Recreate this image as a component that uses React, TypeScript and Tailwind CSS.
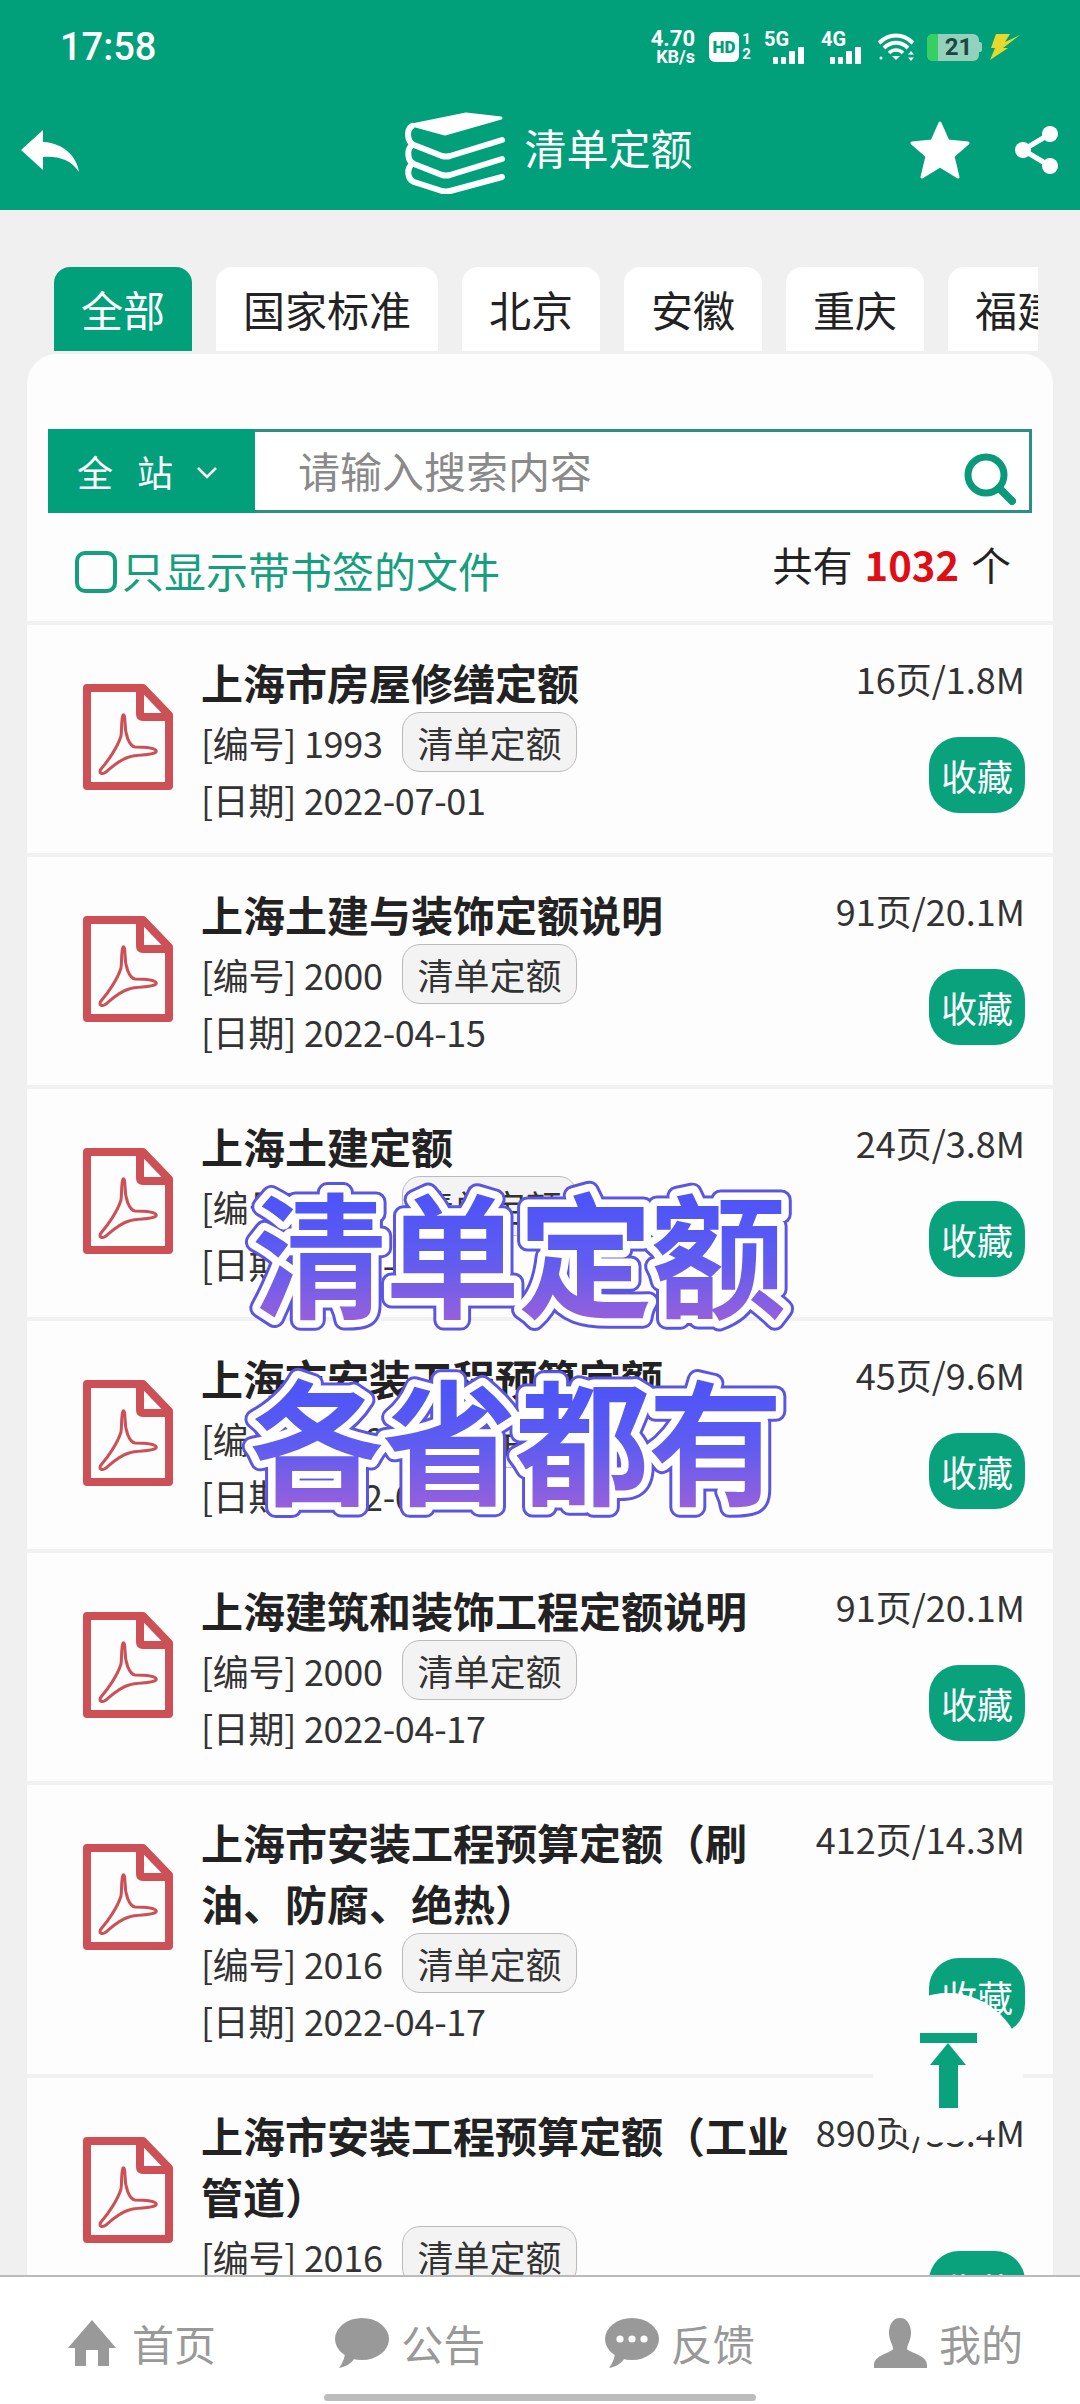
import React from "react";

const items = [
  { t: "上海市房屋修缮定额", n: "1993", d: "2022-07-01", s: "16页/1.8M" },
  { t: "上海土建与装饰定额说明", n: "2000", d: "2022-04-15", s: "91页/20.1M" },
  { t: "上海土建定额", n: "2000", d: "2022-04-15", s: "24页/3.8M" },
  { t: "上海市安装工程预算定额", n: "2016", d: "2022-04-17", s: "45页/9.6M" },
  { t: "上海建筑和装饰工程定额说明", n: "2000", d: "2022-04-17", s: "91页/20.1M" },
  { t: "上海市安装工程预算定额（刷油、防腐、绝热）", n: "2016", d: "2022-04-17", s: "412页/14.3M" },
  { t: "上海市安装工程预算定额（工业管道）", n: "2016", d: "2022-04-17", s: "890页/33.4M" },
];

function PdfIcon() {
  return (
    <svg width="90" height="106" viewBox="0 0 90 106" fill="none" stroke="#cd5056" strokeLinejoin="round">
      <path d="M4 4H60L86 31V102H4Z" strokeWidth="8" />
      <path d="M57 4V30Q57 33 60 33H86" strokeWidth="8" />
      <path d="M40 31C38 37 39 45 38 52C35 62 26 76 18 85C15 89 19 91 23 88C30 82 36 76 46 73C55 70 68 72 73 68C75 64 62 63 52 63C46 62 42 50 42 38C42 33 41 30 40 31Z" strokeWidth="3" />
    </svg>
  );
}

function Bars() {
  return (
    <div className="flex items-end gap-[3px] h-[17px] ml-[9px]">
      <div className="w-[5px] h-[7px] bg-white rounded-[1px]" />
      <div className="w-[5px] h-[7px] bg-white rounded-[1px]" />
      <div className="w-[6px] h-[13px] bg-white rounded-[1px]" />
      <div className="w-[6px] h-[17px] bg-white rounded-[1px]" />
    </div>
  );
}

function Signal({ label }: { label: string }) {
  return (
    <div className="flex flex-col w-[45px] h-[30px]">
      <span className="text-[20px] leading-[15px] font-bold text-white">{label}</span>
      <Bars />
    </div>
  );
}

function StatusBar() {
  return (
    <div className="h-[94px] flex items-center pl-[60px] pr-[60px] justify-between font-['Roboto',sans-serif] text-white">
      <span className="text-[38px] font-medium leading-none">17:58</span>
      <div className="flex items-center">
        <div className="flex flex-col items-end w-[46px] font-bold">
          <span className="text-[22px] leading-[19px]">4.70</span>
          <span className="text-[18px] leading-[17px]">KB/s</span>
        </div>
        <div className="ml-[14px] w-[30px] h-[30px] rounded-[6px] bg-white flex items-center justify-center">
          <span className="text-[#02a07a] text-[17px] font-black leading-none">HD</span>
        </div>
        <div className="ml-[2px] w-[11px] flex flex-col items-center text-[15px] font-bold leading-[15px]">
          <span>1</span>
          <span>2</span>
        </div>
        <div className="ml-[12px]"><Signal label="5G" /></div>
        <div className="ml-[12px]"><Signal label="4G" /></div>
        <svg className="ml-[10px]" width="40" height="30" viewBox="0 0 40 30" fill="none" stroke="#fff">
          <path d="M3 11C13 1 27 1 37 11" strokeWidth="4" />
          <path d="M8 16C15 9 25 9 32 16" strokeWidth="4" />
          <path d="M13 21C17 17 23 17 27 21" strokeWidth="3.5" />
          <path d="M16 24H24L20 28Z" fill="#fff" strokeWidth="0" />
          <circle cx="5" cy="26" r="1.5" fill="#fff" strokeWidth="0" />
          <path d="M35 19L38 22.5H32ZM35 29L38 25.5H32Z" fill="#fff" strokeWidth="0" />
        </svg>
        <div className="ml-[11px] w-[52px] h-[27px] rounded-[6px] bg-[#93d1bd] flex overflow-hidden">
          <div className="w-[11px] h-full bg-[#35cf62]" />
          <span className="flex-1 text-center text-[24px] font-bold leading-[27px] text-[#17493f]">21</span>
        </div>
        <div className="w-[3px] h-[10px] bg-[#93d1bd] rounded-r-[2px]" />
        <svg className="ml-[8px]" width="30" height="26" viewBox="0 0 30 26">
          <path d="M6 0H20L15 8L30 1L13 14H18L0 26L5 14H1Z" fill="#e4d92c" />
        </svg>
      </div>
    </div>
  );
}

function NavBar() {
  return (
    <div className="h-[116px] flex items-start justify-between pl-[21px] pr-[20px] pt-[20px] text-white">
      <svg className="mt-[16px]" width="58" height="42" viewBox="0 0 58 42" fill="#fff">
        <path d="M0 20L22 0V12C44 13 56 28 58 42C50 30 38 26 22 27V40Z" />
      </svg>
      <div className="flex items-center mt-[-2px] ml-[109px]">
        <svg width="102" height="82" viewBox="0 0 102 82" fill="none" stroke="#fff" strokeWidth="6" strokeLinecap="round" strokeLinejoin="round">
          <path d="M8 13L62 2L97 6L41 22Z" fill="#fff" strokeWidth="3" />
          <path d="M98 28L46 44Q42 45 38 44L10 33C3 30 2 18 8 14" />
          <path d="M98 47L46 63Q42 64 38 63L10 52C3 49 3 38 7 34" />
          <path d="M98 65L46 79Q42 80 38 79L10 70C3 67 3 57 7 53" />
        </svg>
        <span className="ml-[18px] text-[42px] leading-none -mt-[12px]">清单定额</span>
      </div>
      <div className="flex items-center">
        <svg className="mt-[6px]" width="62" height="60" viewBox="0 0 62 60" fill="#fff" stroke="#fff" strokeWidth="3" strokeLinejoin="round">
          <path d="M31 3L39 21L59 23L44 36L49 57L31 46L13 57L18 36L3 23L23 21Z" />
        </svg>
        <svg className="ml-[43px] mt-[6px]" width="46" height="50" viewBox="0 0 46 50" fill="#fff" stroke="#fff">
          <circle cx="36" cy="9" r="8" strokeWidth="0" />
          <circle cx="9" cy="25" r="8" strokeWidth="0" />
          <circle cx="36" cy="41" r="8" strokeWidth="0" />
          <path d="M36 9L9 25L36 41" fill="none" strokeWidth="5" />
        </svg>
      </div>
    </div>
  );
}

function Tabs() {
  const tabs = ["国家标准", "北京", "安徽", "重庆", "福建"];
  return (
    <div className="ml-[54px] w-[984px] h-[84px] mt-[57px] flex gap-[24px] overflow-hidden">
      <div className="shrink-0 h-full px-[27px] rounded-t-[16px] bg-[#02a07a] text-white text-[42px] leading-[84px]">全部</div>
      {tabs.map((t) => (
        <div key={t} className="shrink-0 h-full px-[27px] rounded-t-[16px] bg-white text-[#222] text-[42px] leading-[84px]">{t}</div>
      ))}
    </div>
  );
}

function Search() {
  return (
    <div className="mx-[21px] h-[84px] flex border-[3px] border-[#2c9080] bg-white">
      <div className="w-[207px] -ml-[3px] -my-[3px] bg-[#02a07a] flex items-center pl-[29px] text-white text-[36px]">
        <span>全</span>
        <span className="ml-[24px]">站</span>
        <svg className="ml-[24px] mt-[4px]" width="20" height="12" viewBox="0 0 20 12" fill="none" stroke="#fff" strokeWidth="2.5">
          <path d="M1 1L10 10L19 1" />
        </svg>
      </div>
      <div className="flex-1 flex items-center pl-[43px] pb-[2px] text-[42px] text-[#8a8a8a] leading-none">请输入搜索内容</div>
      <svg className="mr-[13px] mt-[21px]" width="52" height="52" viewBox="0 0 52 52" fill="none" stroke="#0a9a7a" strokeWidth="7">
        <circle cx="22" cy="22" r="18" />
        <path d="M35 35L48 48" strokeLinecap="round" strokeWidth="8" />
      </svg>
    </div>
  );
}

function Item({ it }: { it: (typeof items)[number] }) {
  return (
    <div className="flex border-t-[4px] border-[#f1f1f1] pl-[56px] pr-[28px]">
      <div className="shrink-0 pt-[59px]"><PdfIcon /></div>
      <div className="ml-[28px] w-[590px] pt-[26px] pb-[27px]">
        <div className="text-[42px] leading-[61px] font-bold text-[#222]">{it.t}</div>
        <div className="h-[60px] flex items-center text-[36px] text-[#333]">
          <span className="w-[201px] whitespace-nowrap tracking-[-0.3px]">[编号] {it.n}</span>
          <span className="h-[60px] w-[175px] border-[1.5px] border-[#bbb] bg-[#f3f3f3] rounded-[18px] flex items-center justify-center">清单定额</span>
        </div>
        <div className="h-[54px] flex items-center text-[36px] text-[#333] tracking-[-0.3px]">[日期] {it.d}</div>
      </div>
      <div className="flex-1 flex flex-col items-end justify-between pt-[26px] pb-[40px]">
        <div className="text-[36px] leading-[54px] text-[#333] whitespace-nowrap">{it.s}</div>
        <div className="w-[96px] h-[76px] rounded-[30px] bg-[#0aa17d] text-white text-[36px] flex items-center justify-center">收藏</div>
      </div>
    </div>
  );
}

function Promo() {
  const lines = [
    { text: "清单定额", x: 12, y: 138 },
    { text: "各省都有", x: 9, y: 325 },
  ];
  return (
    <svg className="absolute left-[240px] top-[1170px] font-bold" width="570" height="360" fontSize="135" letterSpacing="-2" fontFamily="'Noto Sans CJK SC', sans-serif">
      <defs>
        <linearGradient id="promo" x1="0" y1="0" x2="0" y2="1">
          <stop offset="0.25" stopColor="#4e54f7" />
          <stop offset="0.55" stopColor="#5f5cf0" />
          <stop offset="0.95" stopColor="#a561d6" />
        </linearGradient>
      </defs>
      {lines.map((l) => (
        <g key={l.text} strokeLinejoin="round">
          <text x={l.x} y={l.y} fill="#5a55e2" stroke="#5a55e2" strokeWidth="21">{l.text}</text>
          <text x={l.x} y={l.y} fill="url(#promo)" stroke="#fff" strokeWidth="15" paintOrder="stroke">{l.text}</text>
        </g>
      ))}
    </svg>
  );
}

function BottomNav() {
  const color = "#999";
  return (
    <div className="h-[129px] shrink-0 bg-white border-t-2 border-[#bbb]">
      <div className="h-[117px] pt-[14px] flex items-center pl-[68px] pr-[57px] justify-between text-[42px] leading-none text-[#999]">
        <div className="flex items-center">
          <svg width="48" height="46" viewBox="0 0 48 46" fill={color}>
            <path d="M24 0L48 28H41V46H30V30H18V46H7V28H0Z" />
          </svg>
          <span className="ml-[16px]">首页</span>
        </div>
        <div className="flex items-center">
          <svg width="54" height="50" viewBox="0 0 54 50" fill={color}>
            <ellipse cx="27" cy="21" rx="27" ry="21" />
            <path d="M10 34L20 40C16 46 10 49 4 50C7 46 10 40 10 34Z" />
          </svg>
          <span className="ml-[12px]">公告</span>
        </div>
        <div className="flex items-center">
          <svg width="54" height="50" viewBox="0 0 54 50">
            <ellipse cx="27" cy="21" rx="27" ry="21" fill={color} />
            <path d="M10 34L20 40C16 46 10 49 4 50C7 46 10 40 10 34Z" fill={color} />
            <circle cx="15" cy="21" r="3.6" fill="#fff" />
            <circle cx="27" cy="21" r="3.6" fill="#fff" />
            <circle cx="39" cy="21" r="3.6" fill="#fff" />
          </svg>
          <span className="ml-[12px]">反馈</span>
        </div>
        <div className="flex items-center">
          <svg width="53" height="50" viewBox="0 0 53 50" fill={color}>
            <path d="M26 0C34 0 37 8 37 15C37 22 33 27 33 31C36 35 53 37 53 47V50H0V47C0 37 17 35 19 31C19 27 15 22 15 15C15 8 18 0 26 0Z" />
          </svg>
          <span className="ml-[12px]">我的</span>
        </div>
      </div>
      <div className="mx-auto w-[432px] h-[7px] rounded-full bg-[#bcbcbc]" />
    </div>
  );
}

export default function App() {
  return (
    <div className="relative w-[1080px] h-[2404px] overflow-hidden bg-[#f0f0f0] flex flex-col font-['Noto_Sans_CJK_SC','Noto_Sans',sans-serif]">
      <div className="h-[210px] shrink-0 bg-[#02a07a]">
        <StatusBar />
        <NavBar />
      </div>
      <Tabs />
      <div className="mx-[27px] mt-[3px] flex-1 min-h-0 overflow-hidden rounded-t-[30px] bg-[#fdfdfd]">
        <div className="pt-[75px]">
          <Search />
        </div>
        <div className="h-[108px] flex justify-between pl-[48px] pr-[42px]">
          <div className="flex items-center mt-[4px] text-[42px] text-[#169f7f]">
            <div className="w-[42px] h-[42px] mt-[6px] border-[4px] border-[#169f7f] rounded-[10px] mr-[5px]" />
            只显示带书签的文件
          </div>
          <div className="flex items-center -mt-[6px] text-[40px] text-[#222]">
            共有
            <span className="mx-[12px] text-[#e00d14] font-bold">1032</span>
            个
          </div>
        </div>
        {items.map((it) => (
          <Item key={it.t} it={it} />
        ))}
      </div>
      <BottomNav />

      {/* back to top */}
      <div className="absolute left-[873px] top-[1993px] w-[150px] h-[150px] rounded-full bg-[#fdfdfd] flex flex-col items-center pt-[40px]">
        <div className="w-[57px] h-[10px] bg-[#0aa17d]" />
        <div className="w-0 h-0 border-x-[18px] border-x-transparent border-b-[22px] border-b-[#0aa17d]" />
        <div className="w-[19px] h-[43px] bg-[#0aa17d]" />
      </div>

      <Promo />
    </div>
  );
}
